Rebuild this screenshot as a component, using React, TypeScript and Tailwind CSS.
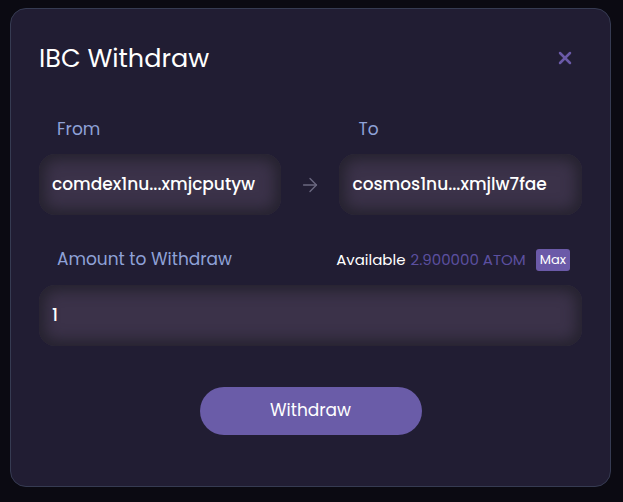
import { ArrowRight, X } from "lucide-react";

const FONT = { fontFamily: '"Poppins", "Inter", "Noto Sans", sans-serif' };

function AddressBox({ value }: { value: string }) {
  return (
    <div className="flex h-[61px] w-full items-center rounded-2xl bg-[#3b3249] px-[13px] shadow-[inset_0_0_14px_6px_#25222f]">
      <span className="text-[17px] font-medium text-white">{value}</span>
    </div>
  );
}

export default function App() {
  return (
    <div className="min-h-screen bg-[#0b0a12] pt-[8px]" style={FONT}>
      <div className="ml-[10px] w-[601px] rounded-2xl border border-[#363b52] bg-[#211d33] px-[28px] pt-[31px] pb-[51px]">
        {/* Header */}
        <div className="flex items-center justify-between">
          <h1 className="text-[25.5px] font-normal leading-[36px] text-white">IBC Withdraw</h1>
          <button className="mr-[7px] text-[#6b5aa8]">
            <X className="h-[20px] w-[20px]" strokeWidth={3} />
          </button>
        </div>

        {/* From / To */}
        <div className="mt-[41px] flex items-end">
          <div className="flex w-[242px] flex-col">
            <span className="mb-[13px] pl-[18px] text-[17px] leading-[24px] text-[#8fa2d8]">From</span>
            <AddressBox value="comdex1nu...xmjcputyw" />
          </div>
          <div className="flex h-[61px] w-[59px] items-center justify-center">
            <ArrowRight className="h-[22px] w-[22px] text-[#6b6880]" strokeWidth={1.5} />
          </div>
          <div className="flex w-[243px] flex-col">
            <span className="mb-[13px] pl-[19px] text-[17px] leading-[24px] text-[#8fa2d8]">To</span>
            <AddressBox value="cosmos1nu...xmjlw7fae" />
          </div>
        </div>

        {/* Amount */}
        <div className="mt-[33px] flex h-[24px] items-center justify-between pl-[18px] pr-[12px]">
          <span className="text-[17px] text-[#8fa2d8]">Amount to Withdraw</span>
          <div className="flex items-center text-[15px]">
            <span className="text-white">Available</span>
            <span className="ml-[5px] text-[#5c50a0]">2.900000 ATOM</span>
            <span className="ml-[10px] rounded-[3px] bg-[#6b5aa8] px-[4px] py-[1px] text-[13px] text-white">Max</span>
          </div>
        </div>
        <div className="mt-[13px] flex h-[61px] items-center rounded-2xl bg-[#3b3249] px-[13px] shadow-[inset_0_0_14px_6px_#25222f]">
          <span className="text-[17px] font-medium text-white">1</span>
        </div>

        {/* Submit */}
        <div className="mt-[41px] flex justify-center">
          <button className="h-[48px] w-[222px] rounded-full bg-[#6a5ca8] text-[17px] text-white">Withdraw</button>
        </div>
      </div>
    </div>
  );
}
